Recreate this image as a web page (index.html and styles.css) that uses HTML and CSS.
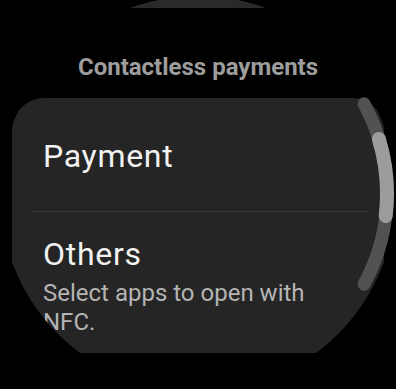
FILE: index.html
```html
<!DOCTYPE html>
<html>
<head>
<meta charset="utf-8">
<link rel="stylesheet" href="styles.css">
</head>
<body>
<div class="screen">
  <div class="prev-card"></div>
  <h1 class="title">Contactless payments</h1>
  <div class="card">
    <div class="item item-first">
      <div class="item-title">Payment</div>
    </div>
    <div class="divider"></div>
    <div class="item item-second">
      <div class="item-title">Others</div>
      <div class="item-sub">Select apps to open with NFC.</div>
    </div>
  </div>
</div>
<svg class="scrollbar" width="396" height="389" viewBox="0 0 396 389">
  <path d="M364.1 103.8 A189 189 0 0 1 364.1 284.2" fill="none" stroke="#525252" stroke-width="13" stroke-linecap="round"/>
  <path d="M378.9 139 A189 189 0 0 1 385.7 216" fill="none" stroke="#9c9c9c" stroke-width="14" stroke-linecap="round"/>
</svg>
</body>
</html>
```
FILE: styles.css
```css
html, body {
  margin: 0;
  padding: 0;
  background: #000;
  width: 396px;
  height: 389px;
  overflow: hidden;
  font-family: Roboto, "Noto Sans", sans-serif;
}
.screen {
  width: 396px;
  height: 396px;
  margin-top: -4px;
  border-radius: 50%;
  overflow: hidden;
  display: flex;
  flex-direction: column;
}
.prev-card {
  height: 12px;
  flex: none;
  margin: 0 12px;
  background: #2a2a2a;
}
.title {
  margin: 45px 0 0;
  font-size: 24px;
  line-height: 28px;
  font-weight: 700;
  color: #9d9d9d;
  text-align: center;
}
.card {
  margin: 17px 12px 0;
  height: 255px;
  flex: none;
  background: #252525;
  border-radius: 32px;
  display: flex;
  flex-direction: column;
}
.item {
  padding-left: 31px;
  padding-right: 20px;
}
.item-first {
  padding-top: 39px;
  padding-bottom: 36px;
}
.item-second {
  padding-top: 23px;
}
.item-title {
  font-size: 32px;
  line-height: 38px;
  letter-spacing: 0.7px;
  color: #f2f2f2;
}
.item-sub {
  margin-top: 6px;
  font-size: 24px;
  line-height: 28.5px;
  color: #b4b4b4;
  width: 280px;
}
.divider {
  height: 1px;
  background: #3b3b3b;
  margin: 0 16px 0 19px;
}
.scrollbar {
  position: absolute;
  left: 0;
  top: 0;
}
```
